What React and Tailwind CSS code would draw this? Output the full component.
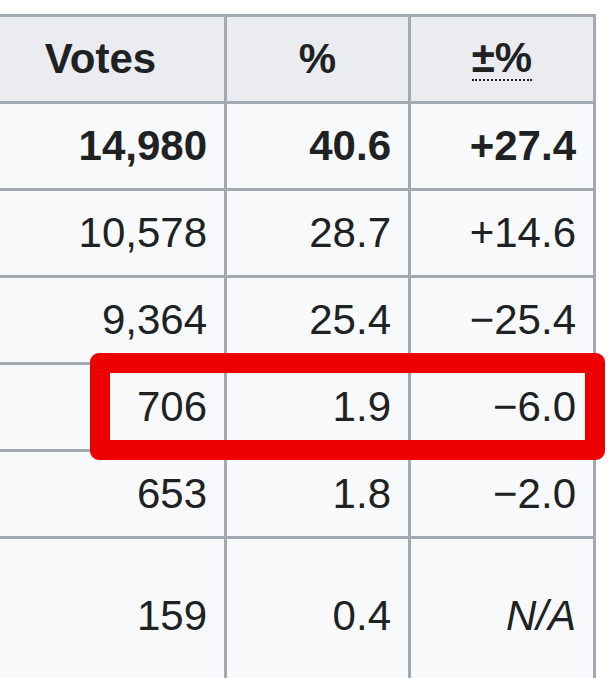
import React from 'react';

const ROWS = [
  { votes: '14,980', pct: '40.6', change: '+27.4', bold: true },
  { votes: '10,578', pct: '28.7', change: '+14.6' },
  { votes: '9,364', pct: '25.4', change: '−25.4' },
  { votes: '706', pct: '1.9', change: '−6.0' },
  { votes: '653', pct: '1.8', change: '−2.0' },
  { votes: '159', pct: '0.4', change: 'N/A', tall: true, italic: true },
];

const cellBase = 'flex items-center border-b-[3px] border-r-[3px] border-[#a2a9b1] px-[17px]';

export default function App() {
  return (
    <div className="relative h-[678px] w-[615px] overflow-hidden bg-white font-['Liberation_Sans',Arial,sans-serif] text-[42px] leading-none text-[#202122]">
      <div className="pt-[14px]">
        <div className="ml-[-26px] grid w-[622px] grid-cols-[250px_184px_185px] border-l-[3px] border-t-[3px] border-[#a2a9b1]">
          {/* Header */}
          <div className={`${cellBase} h-[87px] justify-center bg-[#eaecf0] font-bold`}>Votes</div>
          <div className={`${cellBase} h-[87px] justify-center bg-[#eaecf0] font-bold`}>%</div>
          <div className={`${cellBase} h-[87px] justify-center bg-[#eaecf0] font-bold`}>
            <abbr title="Change" className="border-b-2 border-dotted border-[#202122] no-underline">±%</abbr>
          </div>

          {/* Results */}
          {ROWS.map((row, i) => {
            const h = row.tall ? 'h-[156px]' : 'h-[87px]';
            const weight = row.bold ? 'font-bold' : '';
            return (
              <React.Fragment key={i}>
                <div className={`${cellBase} ${h} ${weight} justify-end bg-[#f8f9fa]`}>{row.votes}</div>
                <div className={`${cellBase} ${h} ${weight} justify-end bg-[#f8f9fa]`}>{row.pct}</div>
                <div className={`${cellBase} ${h} ${weight} justify-end bg-[#f8f9fa] ${row.italic ? 'italic' : ''}`}>
                  {row.change}
                </div>
              </React.Fragment>
            );
          })}
        </div>
      </div>

      {/* highlight annotation */}
      <div className="pointer-events-none absolute left-[90px] top-[353px] h-[107px] w-[515px] rounded-[9px] border-[20px] border-[#ee0000]" />
    </div>
  );
}
